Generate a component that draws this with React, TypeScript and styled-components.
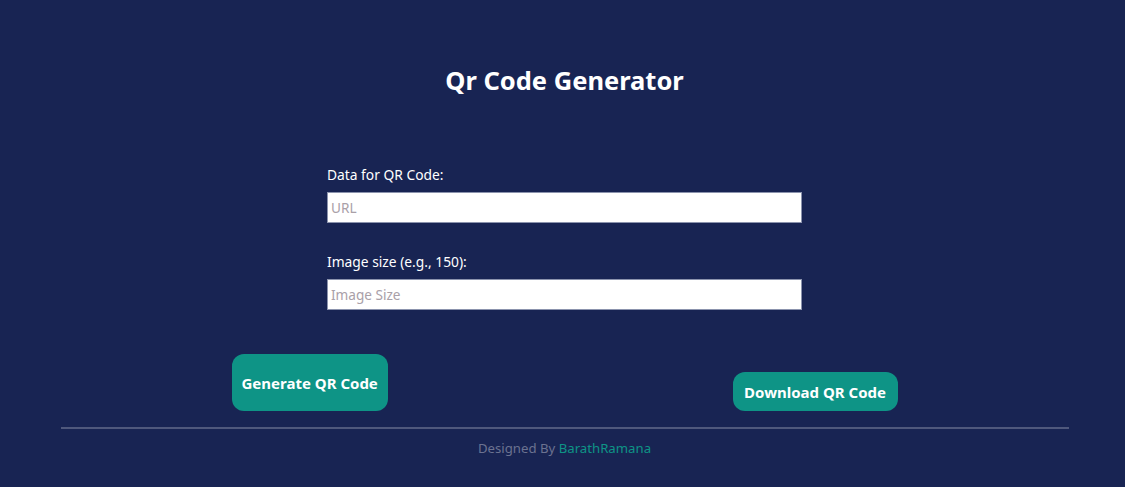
import React, { useState } from 'react';
import styled, { createGlobalStyle } from 'styled-components';

const GlobalStyle = createGlobalStyle`
  html, body {
    margin: 0;
    padding: 0;
    background-color: #182453;
    font-family: "Noto Sans", "Open Sans", sans-serif;
  }
`;

const App: React.FC = () => {
  const [url, setUrl] = useState('');
  const [size, setSize] = useState('');

  return (
    <Page>
      <GlobalStyle />
      <Title>Qr Code Generator</Title>
      <Form>
        <Field>
          <Label htmlFor="dataInput">Data for QR Code:</Label>
          <Input
            id="dataInput"
            type="text"
            placeholder="URL"
            value={url}
            onChange={(e) => setUrl(e.target.value)}
          />
        </Field>
        <Field>
          <Label htmlFor="sizeInput">Image size (e.g., 150):</Label>
          <Input
            id="sizeInput"
            type="text"
            placeholder="Image Size"
            value={size}
            onChange={(e) => setSize(e.target.value)}
          />
        </Field>
      </Form>
      <ButtonRow>
        <ActionButton $tall>Generate QR Code</ActionButton>
        <ActionButton>Download QR Code</ActionButton>
      </ButtonRow>
      <Divider />
      <Footer>
        Designed By <FooterLink>BarathRamana</FooterLink>
      </Footer>
    </Page>
  );
};

const Page = styled.div`
  min-height: 487px;
  display: flex;
  flex-direction: column;
  align-items: center;
  padding-top: 61px;
  box-sizing: border-box;
`;

const Title = styled.h1`
  margin: 0;
  color: #ffffff;
  font-size: 25.5px;
  font-weight: 700;
  line-height: 38px;
  transform: translateX(2px);
`;

const Form = styled.div`
  width: 475px;
  margin-top: 67px;
  margin-left: 4px;
  display: flex;
  flex-direction: column;
  gap: 30px;
`;

const Field = styled.div`
  display: flex;
  flex-direction: column;
  gap: 8px;
`;

const Label = styled.label`
  color: #ffffff;
  font-size: 13.8px;
  line-height: 18px;
`;

const Input = styled.input`
  box-sizing: border-box;
  width: 100%;
  height: 31px;
  margin: 0;
  padding: 0 3px;
  border: 1px solid #8b93ad;
  background: #ffffff;
  font-family: inherit;
  font-size: 13.6px;
  color: #222;
  outline: none;

  &::placeholder {
    color: #a9a0a8;
  }
`;

const ButtonRow = styled.div`
  width: 666px;
  margin-top: 44px;
  margin-left: 4px;
  display: flex;
  justify-content: space-between;
  align-items: flex-end;
`;

const ActionButton = styled.button<{ $tall?: boolean }>`
  background-color: #0e9486;
  color: #ffffff;
  border: none;
  border-radius: 12px;
  height: ${(p) => (p.$tall ? '57px' : '39px')};
  padding: 0 ${(p) => (p.$tall ? '10px' : '11.5px')};
  font-family: inherit;
  font-size: 15px;
  font-weight: 700;
  cursor: pointer;
`;

const Divider = styled.hr`
  width: 1008px;
  margin: 16px 0 0 4px;
  border: none;
  border-top: 2px solid #4f587c;
`;

const Footer = styled.footer`
  margin-top: 10px;
  color: #6b7290;
  font-size: 13.2px;
  line-height: 18px;
  transform: translateX(2px);
`;

const FooterLink = styled.span`
  color: #0e9486;
`;

export default App;
